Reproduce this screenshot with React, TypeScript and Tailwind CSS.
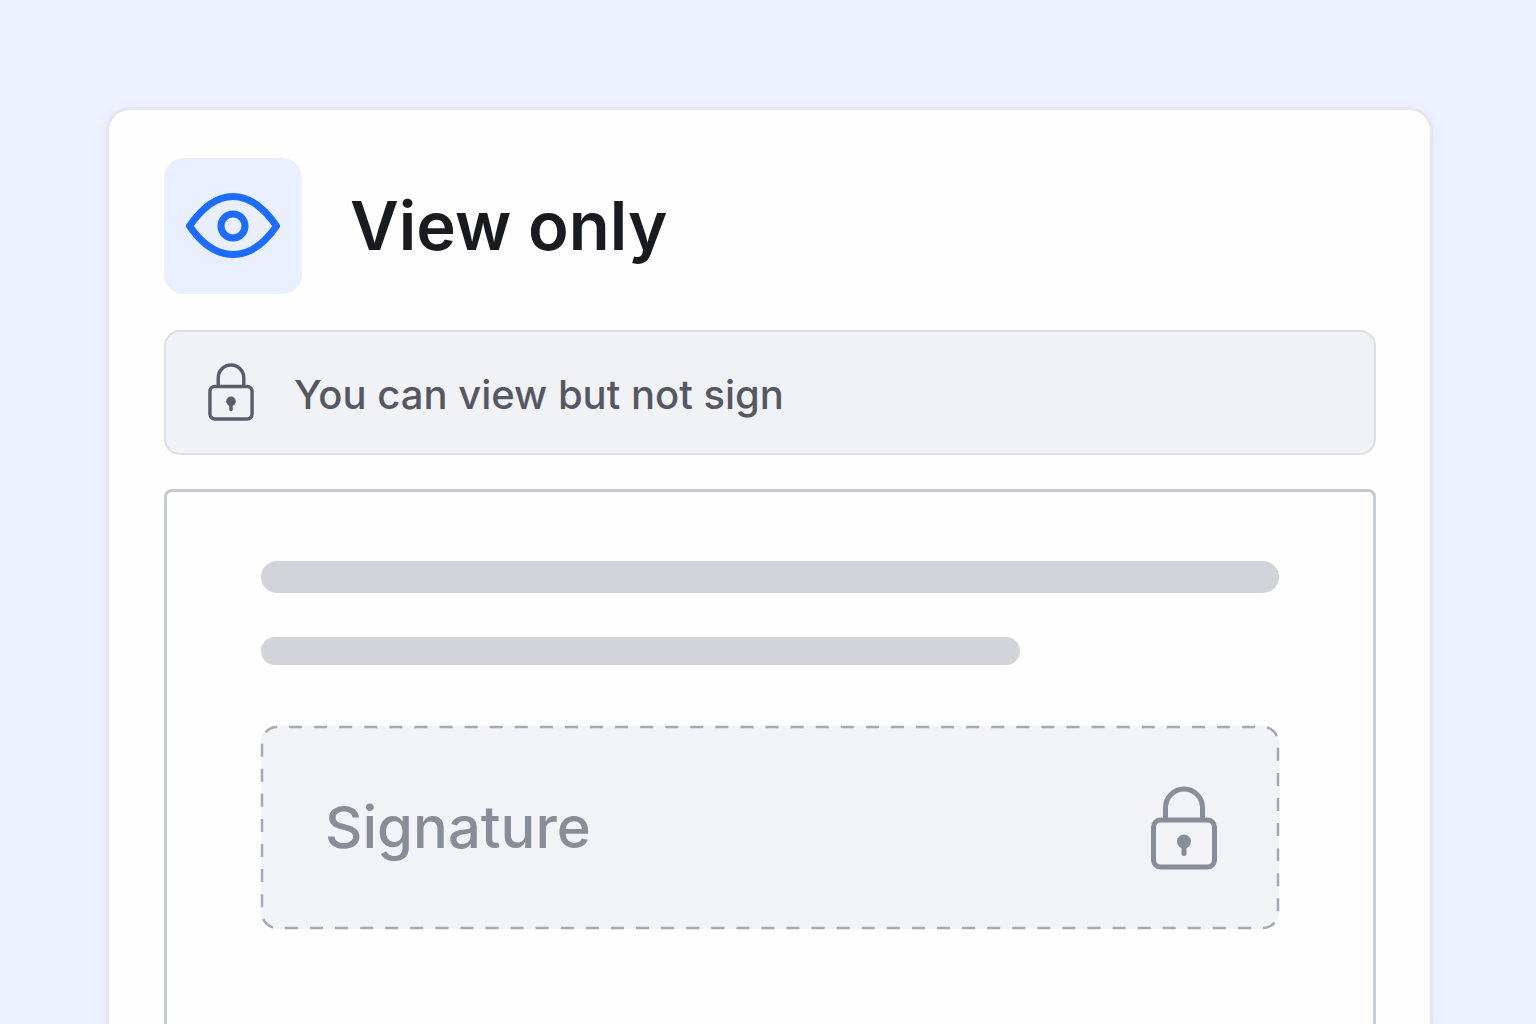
import React from "react";

type IconProps = {
  className?: string;
};

const EyeIcon: React.FC<IconProps> = ({ className }) => (
  <svg
    viewBox="0 0 96 68"
    className={className}
    fill="none"
    stroke="currentColor"
    strokeWidth="7"
    strokeLinejoin="round"
    aria-hidden="true"
  >
    <path d="M4.500 34C14.500 19.500 28.500 4.500 48 4.500S81.500 19.500 91.500 34C81.500 48.500 67.500 62.500 48 62.500S14.500 48.500 4.500 34Z" />
    <circle cx="48" cy="34" r="12" />
  </svg>
);

const LockIcon: React.FC<IconProps> = ({ className }) => (
  <svg
    viewBox="0 0 66 84"
    className={className}
    fill="none"
    stroke="currentColor"
    strokeWidth="5"
    aria-hidden="true"
  >
    <path d="M14.500 34V21.500a18.500 18.500 0 0 1 37 0V34" />
    <rect x="2.500" y="34" width="61" height="47" rx="7" />
    <circle cx="33" cy="55.500" r="7" fill="currentColor" stroke="none" />
    <path d="M33 57v10.500" strokeLinecap="round" />
  </svg>
);

const DashedOutline: React.FC = () => (
  <svg
    className="absolute inset-0 h-full w-full overflow-visible p-px text-[#a5a9b4]"
    fill="none"
    aria-hidden="true"
  >
    <rect
      width="100%"
      height="100%"
      rx="15"
      pathLength="2400"
      stroke="currentColor"
      strokeWidth="2.5"
      strokeDasharray="13 12"
      strokeDashoffset="-12"
    />
  </svg>
);

const Notice: React.FC<{ text: string }> = ({ text }) => (
  <div className="mt-9 flex h-[125px] items-center gap-10 rounded-2xl border-2 border-[#dddee5] bg-[#f1f2f6] pl-[42px]">
    <LockIcon className="mb-0.5 h-[58px] w-[46px] text-[#5b5e69]" />
    <p className="mt-1 text-[40px] font-medium text-[#555863]">{text}</p>
  </div>
);

const SignatureField: React.FC = () => (
  <div className="relative mt-[61px] flex h-[203px] items-center justify-between rounded-2xl bg-[#f2f3f7] pr-[62px] pl-16">
    <DashedOutline />
    <span className="text-[58px] font-medium text-[#888d98]">Signature</span>
    <LockIcon className="h-[84px] w-[66px] text-[#888d98]" />
  </div>
);

export default function App() {
  return (
    <main className="flex h-screen flex-col overflow-hidden bg-[#eef2ff] pt-[107px] pr-[103px] pl-[106px] font-['Inter',sans-serif]">
      <section className="flex flex-1 flex-col rounded-t-3xl border-3 border-b-0 border-[#e5e6ee] bg-[#fefefe] pt-12 pr-[54px] pl-[55px] shadow-[0_4px_16px_rgba(80,90,160,0.07)]">
        <header className="flex items-center gap-12">
          <div className="flex h-[136px] w-[138px] items-center justify-center rounded-[20px] bg-[#e9effe]">
            <EyeIcon className="h-[68px] w-24 text-[#1c6cff]" />
          </div>
          <h1 className="text-[67px] font-semibold text-[#191b20]">
            View only
          </h1>
        </header>

        <Notice text="You can view but not sign" />

        <article className="mt-[34px] flex-1 rounded-t-lg border-3 border-b-0 border-[#c6c8d2] px-[94px] pt-[69px]">
          <div className="h-8 rounded-full bg-[#d3d4da]" />
          <div className="mt-11 h-7 w-full max-w-[759px] rounded-full bg-[#d3d4da]" />
          <SignatureField />
        </article>
      </section>
    </main>
  );
}
